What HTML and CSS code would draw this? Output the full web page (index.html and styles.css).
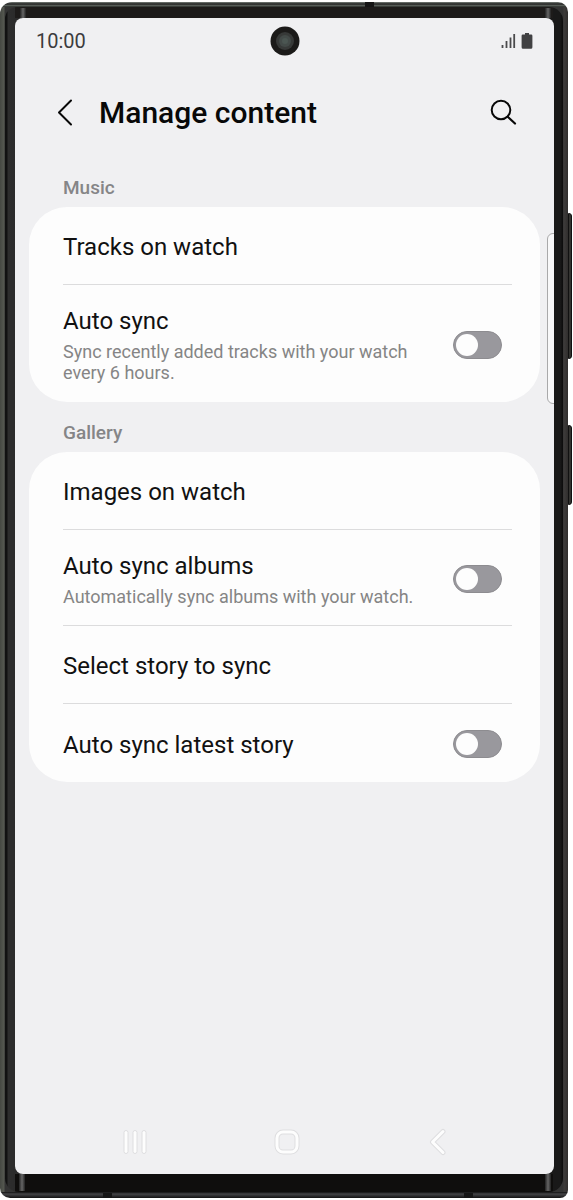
FILE: index.html
```html
<!DOCTYPE html>
<html lang="en">
<head>
<meta charset="utf-8">
<meta name="viewport" content="width=device-width, initial-scale=1">
<title>Manage content</title>
<link rel="stylesheet" href="styles.css">
</head>
<body>
<div class="phone">
  <span class="antenna antenna-top"></span>
  <span class="antenna antenna-bottom-left"></span>
  <span class="antenna antenna-bottom-right"></span>
  <span class="side-key volume-key"></span>
  <span class="side-key power-key"></span>
  <div class="bezel">
    <span class="glint glint-tl"></span>
    <span class="glint glint-tr"></span>
    <span class="glint glint-bl"></span>
    <span class="glint glint-br"></span>
    <div class="screen">
      <span class="edge-panel"></span>
      <div class="status-bar">
        <span>10:00</span>
        <svg class="camera" width="30" height="30" viewBox="0 0 30 30" aria-hidden="true">
          <circle cx="15" cy="15" r="14.500" fill="#1b1a19"/>
          <circle cx="15" cy="15" r="9" fill="#373938"/>
          <circle cx="15" cy="15" r="6" fill="#434a48"/>
          <circle cx="15" cy="15" r="3" fill="#4b5652"/>
        </svg>
        <svg class="status-icons" width="33" height="18" viewBox="0 0 33 18" aria-hidden="true">
          <path d="M2.500 13V16M6.500 9V16M10.500 5.500V16M14.200 2V16" stroke="#4a4a4c" stroke-width="1.800" fill="none"/>
          <path d="M25 1h4v1.500h2.200a1.200 1.200 0 0 1 1.200 1.200v11.600a1.500 1.500 0 0 1-1.500 1.500h-7.800a1.500 1.500 0 0 1-1.500-1.500v-11.600a1.200 1.200 0 0 1 1.200-1.200h2.200z" fill="#414143"/>
        </svg>
      </div>
      <header class="app-bar">
        <button class="icon-button" type="button" aria-label="Back">
          <svg width="16" height="28" viewBox="0 0 16 28"><path d="M14 1.500 2 13.500 14 25.500" fill="none" stroke="#080808" stroke-width="2" stroke-linecap="round" stroke-linejoin="round"/></svg>
        </button>
        <h1 class="title">Manage content</h1>
        <button class="icon-button" type="button" aria-label="Search">
          <svg width="28" height="28" viewBox="0 0 28 28"><circle cx="12" cy="11" r="9.300" fill="none" stroke="#080808" stroke-width="2"/><path d="M18.700 17.700 26 24.500" stroke="#080808" stroke-width="2.200" stroke-linecap="round"/></svg>
        </button>
      </header>
      <main class="content">
        <h2 class="section-title">Music</h2>
        <section class="card">
          <a class="row" href="#tracks">Tracks on watch</a>
          <div class="row">
            <label class="row-text" for="auto-sync">Auto sync
              <span class="description">Sync recently added tracks with your watch every 6 hours.</span>
            </label>
            <input class="switch" type="checkbox" role="switch" id="auto-sync">
          </div>
        </section>
        <h2 class="section-title">Gallery</h2>
        <section class="card">
          <a class="row" href="#images">Images on watch</a>
          <div class="row">
            <label class="row-text" for="auto-albums">Auto sync albums
              <span class="description">Automatically sync albums with your watch.</span>
            </label>
            <input class="switch" type="checkbox" role="switch" id="auto-albums">
          </div>
          <a class="row" href="#story">Select story to sync</a>
          <div class="row">
            <label class="row-text" for="auto-story">Auto sync latest story</label>
            <input class="switch" type="checkbox" role="switch" id="auto-story">
          </div>
        </section>
      </main>
      <nav class="nav-bar" aria-label="System navigation">
        <button class="nav-button" type="button" aria-label="Recent apps">
          <svg width="28" height="28" viewBox="0 0 28 28"><g fill="#fdfdfd" stroke="#dedee0"><rect x="2" y="2.500" width="4" height="23" rx="2"/><rect x="11" y="2.500" width="4" height="23" rx="2"/><rect x="20" y="2.500" width="4" height="23" rx="2"/></g></svg>
        </button>
        <button class="nav-button" type="button" aria-label="Home">
          <svg width="28" height="28" viewBox="0 0 28 28"><rect x="4" y="4" width="20" height="20" rx="6" fill="none" stroke="#dedee0" stroke-width="5"/><rect x="4" y="4" width="20" height="20" rx="6" fill="none" stroke="#fdfdfd" stroke-width="3"/></svg>
        </button>
        <button class="nav-button" type="button" aria-label="Back">
          <svg width="28" height="28" viewBox="0 0 28 28"><g fill="none" stroke-linecap="round" stroke-linejoin="round"><path d="M19 3.500 8.500 14l10.500 10.500" stroke="#dedee0" stroke-width="5"/><path d="M19 3.500 8.500 14l10.500 10.500" stroke="#fdfdfd" stroke-width="3"/></g></svg>
        </button>
      </nav>
    </div>
  </div>
</div>
</body>
</html>
```
FILE: styles.css
```css
* {
  box-sizing: border-box;
}

body {
  margin: 0;
  padding: 2px 5px 2px 0;
  min-height: 100vh;
  display: flex;
  background: #fff;
  color: #111;
  font-family: Roboto, "Liberation Sans", sans-serif;
}

/* Device frame */
.phone {
  position: relative;
  flex: 1;
  display: flex;
  padding: 5px 5px 6px;
  border-radius: 12px 10px 8px 10px;
  background:
    linear-gradient(#7b827c 0, #222 2px, #687069 4px, #080808 5px, transparent 5px) top / 100% 5px no-repeat,
    linear-gradient(#111 0, #444446 2px, #2c2c2e 4px, #121212 6px) bottom / 100% 6px no-repeat,
    linear-gradient(90deg, #454842, #555850 4px, #333 5px, #333 calc(100% - 5px), #3d3b3a calc(100% - 4px), #302e2d);
}

.bezel {
  position: relative;
  flex: 1;
  display: flex;
  padding: 11px 9px 18px 10px;
  border-radius: 12px 14px 14px 14px;
  background:
    linear-gradient(#1d1b1a, #1d1b1a) top / calc(100% - 20px) 11px no-repeat,
    linear-gradient(#0f0e0d, #0f0e0d) bottom / calc(100% - 20px) 18px no-repeat,
    linear-gradient(90deg, #111 2px, #2d2d2d 3px, #2b2b2b 10px, #191919 calc(100% - 9px), #191919 calc(100% - 3px), #0b0b0b);
}

.glint {
  position: absolute;
  width: 6px;
  height: 10px;
  background: linear-gradient(90deg, #222, #666, #222);
}

.glint-tl { top: 1px; left: 15px; }
.glint-tr { top: 1px; right: 12px; }
.glint-bl { bottom: 1px; left: 14px; height: 17px; }
.glint-br { bottom: 1px; right: 12px; height: 17px; }

.antenna {
  position: absolute;
  width: 9px;
  height: 5px;
  background: #151515;
}

.antenna-top { top: 0; left: 365px; }
.antenna-bottom-left { bottom: 0; left: 103px; }
.antenna-bottom-right { bottom: 0; right: 95px; }

.side-key {
  position: absolute;
  left: 100%;
  width: 4px;
  border: 1px solid #111;
  border-radius: 0 3px 3px 0;
  background: #343431;
}

.volume-key { top: 211px; height: 146px; }
.power-key { top: 423px; height: 80px; }

/* Screen */
.screen {
  position: relative;
  flex: 1;
  min-width: 0;
  display: flex;
  flex-direction: column;
  overflow: hidden;
  border-radius: 8px;
  background: #f0f0f2;
}

.edge-panel {
  position: absolute;
  top: 215px;
  right: -1px;
  width: 8px;
  height: 171px;
  border: 1px solid #a9a9aa;
  border-radius: 6px 0 0 6px;
  background: #f8f8f9;
}

.status-bar {
  display: grid;
  grid-template-columns: 1fr auto 1fr;
  align-items: center;
  height: 46px;
  padding: 0 21px;
  color: #3c3c3e;
  font-size: 20px;
  line-height: 24px;
}

.status-icons {
  justify-self: end;
}

.app-bar {
  display: flex;
  align-items: center;
  height: 60px;
  margin-top: 19px;
  padding: 0 36px 0 35px;
}

.icon-button,
.nav-button {
  display: flex;
  align-items: center;
  justify-content: center;
  padding: 0;
  border: 0;
  background: none;
}

.icon-button {
  width: 30px;
  height: 48px;
}

.title {
  flex: 1;
  margin: 0;
  padding-left: 19px;
  color: #080808;
  font-size: 30px;
  font-weight: 500;
  line-height: 36px;
}

.content {
  padding: 14px 14px 0;
}

.section-title {
  display: flex;
  align-items: center;
  height: 50px;
  margin: 0;
  padding: 12px 34px 0;
  color: #858587;
  font-size: 19px;
  font-weight: 500;
  line-height: 24px;
}

.card {
  padding: 0 28px 0 34px;
  border-radius: 38px;
  background: #fdfdfd;
}

.row {
  display: flex;
  align-items: center;
  justify-content: space-between;
  gap: 24px;
  min-height: 78px;
  padding: 21px 10px 18px 0;
  border-bottom: 1px solid #dcdcdd;
  color: #111;
  font-size: 24px;
  line-height: 28px;
  text-decoration: none;
}

.row:last-child {
  border-bottom-color: transparent;
}

.row-text {
  flex: 1;
  padding-top: 1px;
}

.description {
  display: block;
  margin-top: 6px;
  color: #858585;
  font-size: 18px;
  line-height: 21px;
}

.switch {
  appearance: none;
  flex: none;
  width: 49px;
  height: 28px;
  margin: 0;
  padding: 2px;
  border: 1px solid #8d8c90;
  border-radius: 14px;
  background: #99989d;
}

.switch::before {
  content: "";
  display: block;
  width: 22px;
  height: 22px;
  border-radius: 50%;
  background: #fdfdfd;
}

.switch:checked::before {
  margin-left: auto;
}

.nav-bar {
  display: flex;
  justify-content: space-around;
  margin-top: auto;
  padding: 0 41px 18px 45px;
}
```
